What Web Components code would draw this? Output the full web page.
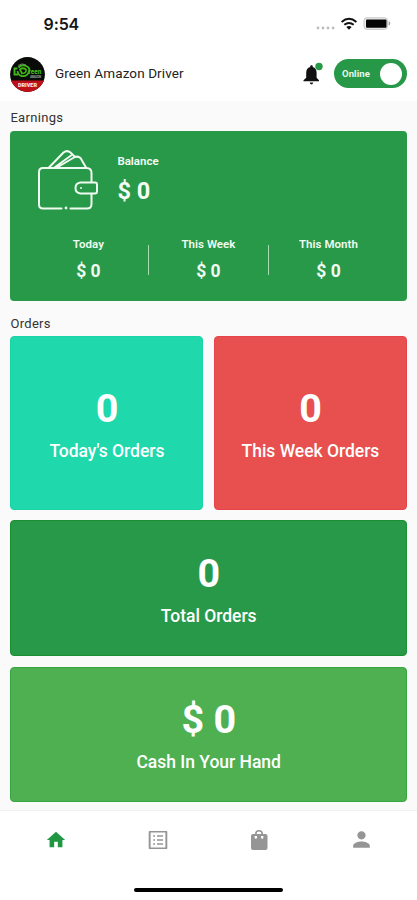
<!DOCTYPE html>
<html lang="en">
<head>
<meta charset="utf-8">
<title>Green Amazon Driver</title>
<style>
html,body{margin:0;height:100%;background:#fff;font-family:Roboto,"Liberation Sans",sans-serif}
</style>
</head>
<body>
<driver-app></driver-app>
<script>
const define=(name,html)=>{
  const t=document.createElement('template');
  t.innerHTML=html;
  customElements.define(name,class extends HTMLElement{
    constructor(){super();this.attachShadow({mode:'open'}).append(t.content.cloneNode(true));}
  });
};

define('status-bar',`
<style>
:host{display:flex;height:48px;box-sizing:border-box;padding:0 26px 0 43.500px;align-items:center;justify-content:space-between}
.time{font:600 16px/20px Inter,sans-serif;color:#161616;letter-spacing:-.1px}
svg{display:block;margin-top:-1px}
</style>
<span class="time">9:54</span>
<svg width="76" height="20" viewBox="0 0 76 20">
<g fill="#bdbdbd"><circle cx="3" cy="14" r="1.400"/><circle cx="8" cy="14" r="1.400"/><circle cx="13" cy="14" r="1.400"/><circle cx="18.100" cy="14" r="1.400"/></g>
<g fill="none" stroke="#111" stroke-width="2"><path d="M26.600 7.900Q34 1.700 41.400 7.900"/><path d="M29.300 10.800Q34 7.100 38.700 10.800"/></g>
<path d="M31.300 12.900Q34 10.900 36.700 12.900L34 15.800Z" fill="#111"/>
<rect x="49" y="3.800" width="23.500" height="11.500" rx="3" fill="#eee" stroke="#c4c4c4"/>
<rect x="51" y="5.500" width="20.500" height="8.300" rx="1" fill="#050505"/>
<path d="M74 7.600q2 1.700 0 3.600Z" fill="#999" stroke="#999" stroke-width=".6"/>
</svg>`);

define('brand-avatar',`
<style>:host{display:block;width:35px;height:35px}svg{display:block}text{font-family:Roboto,sans-serif;font-weight:900}</style>
<svg width="35" height="35" viewBox="0 0 35 35">
<defs><clipPath id="c"><circle cx="17.500" cy="17.500" r="17.400"/></clipPath></defs>
<g clip-path="url(#c)">
<rect width="35" height="35" fill="#080b08"/>
<rect y="23.500" width="35" height="12" fill="#bd1018"/>
<g fill="none" stroke="#3fb518" stroke-width="1.900">
<path d="M8.500 10.500Q12 6.500 17 9.500Q20.500 11.500 18.800 15Q17 20 11.500 19Q8 18 7.500 14"/>
<path d="M7.500 11.500H4.500V17.500H8"/>
<path d="M10 12.500Q13 10 16 12.500Q17 16 12 16.500Z" stroke-width="1.700"/>
</g>
<path d="M8 8.500Q12 5.500 16 8" fill="none" stroke="#899387" stroke-width=".8"/>
<text x="18.500" y="17.300" font-size="7" textLength="13" lengthAdjust="spacingAndGlyphs" fill="#3fb518">reen</text>
<text x="20" y="20.600" font-size="3" textLength="11" fill="#8a938a">AMAZON</text>
<text x="17.500" y="30" font-size="5.200" textLength="19" lengthAdjust="spacingAndGlyphs" text-anchor="middle" fill="#ffe5e5">DRIVER</text>
</g></svg>`);

define('online-switch',`
<style>
:host{display:flex;box-sizing:border-box;width:73px;height:29px;border-radius:15px;background:#279847;align-items:center;justify-content:space-between;padding:0 5px 0 8px;color:#e9f8ec;font-size:9.500px;font-weight:700;margin-top:-2px}
span{letter-spacing:.1px}
i{width:22px;height:22px;border-radius:50%;background:#fff}
</style><span><slot></slot></span><i></i>`);

define('app-header',`
<style>
:host{display:flex;height:53px;box-sizing:border-box;padding:0 10px;align-items:center;background:#fff}
.name{margin:-4px 0 0 10px;font-size:13.500px;line-height:18px;letter-spacing:.1px;color:#222;flex:1}
.bell{display:block;margin:-2px 10px 0 0}
</style>
<brand-avatar></brand-avatar>
<span class="name"><slot></slot></span>
<svg class="bell" width="22" height="24" viewBox="0 0 22 24">
<path d="M9.500 3.200c.8 0 1.300.5 1.300 1.200v.6c2.500.7 3.800 2.900 3.800 5.800v5l2.400 2.500v1H1.500v-1l2.700-2.500v-5C4.200 7.900 5.500 5.700 8.200 5v-.6c0-.7.500-1.200 1.300-1.200Z" fill="#111"/>
<path d="M7.700 20.500h3.600q-.4 2-1.800 2t-1.800-2Z" fill="#222"/>
<circle cx="17" cy="4.500" r="3.700" fill="#289947"/>
</svg>
<online-switch>Online</online-switch>`);

define('section-title',`
<style>:host{display:block;font-size:13px;line-height:18px;height:18px;letter-spacing:.32px;color:#333}</style><slot></slot>`);

define('wallet-icon',`
<style>:host{display:block;width:62px;height:62px}svg{display:block}</style>
<svg width="62" height="62" viewBox="0 0 62 62" fill="none" stroke="#effbf0" stroke-width="2" stroke-linecap="round" stroke-linejoin="round">
<path d="M24.500 59.500H6Q2 59.500 2 55.500V23Q2 19 6 19H49.500Q54.500 19 54.500 24V33M54.500 45V55Q54.500 59.500 50 59.500H33.500"/>
<path d="M12 18.500L26.500 3.500Q30 0.800 33.500 3.500L38 8M20 18.500L37 8.500Q40.500 6.500 43.500 9L49 18.500M17.500 18.500L34 6.500"/>
<path d="M43.500 33.500H58Q60 33.500 60 35.500V42.500Q60 44.500 58 44.500H43.500Q38.500 44 38.500 39Q38.500 34 43.500 33.500Z"/>
<circle cx="44" cy="39" r="1" fill="#effbf0" stroke="none"/><circle cx="29" cy="59" r="1.400" fill="#effbf0" stroke="none"/>
</svg>`);

define('stat-item',`
<style>
:host{display:flex;flex-direction:column;align-items:center;color:#f0fbf1}
.l{font-size:11.500px;font-weight:600;line-height:16px;letter-spacing:.05px}
.v{font-size:17.500px;font-weight:700;line-height:22px;margin-top:8px}
</style><span class="l"><slot name="label"></slot></span><span class="v"><slot></slot></span>`);

define('earnings-card',`
<style>
:host{display:block;box-sizing:border-box;height:169.500px;border-radius:4px;background:#289949;color:#f5fdf5;padding-top:18px}
.top{display:flex;padding-left:27px;height:62px}
.bal{margin-left:18px;display:flex;flex-direction:column;padding-top:4px}
.l{font-size:11.500px;font-weight:600;line-height:16px}
.v{font-size:23.500px;font-weight:700;line-height:28px;margin-top:8px}
.row{display:grid;grid-template-columns:1fr 1px 1fr 1px 1fr;margin:25px 19px 0 18.500px}
.row i{background:#a9dcb0;width:1.500px;height:30px;margin-top:9px}
</style>
<div class="top"><wallet-icon></wallet-icon><div class="bal"><span class="l">Balance</span><span class="v">$ 0</span></div></div>
<div class="row">
<stat-item><span slot="label">Today</span>$ 0</stat-item><i></i>
<stat-item><span slot="label">This Week</span>$ 0</stat-item><i></i>
<stat-item><span slot="label">This Month</span>$ 0</stat-item>
</div>`);

define('metric-card',`
<style>
:host{display:flex;box-sizing:border-box;flex-direction:column;align-items:center;justify-content:center;height:var(--h,135px);background:var(--bg);border:1px solid var(--edge);border-radius:4px;color:#fff}
.v{font-size:39.500px;font-weight:700;line-height:48px;margin-top:2px;letter-spacing:-.2px}
.l{font-size:17.500px;font-weight:500;line-height:24px;margin-top:6px;letter-spacing:-.02px}
</style><span class="v"><slot></slot></span><span class="l"><slot name="label"></slot></span>`);

define('tab-bar',`
<style>
:host{display:block;height:90px;background:#fff;border-top:1px solid #f1f1f1;box-sizing:border-box}
nav{display:grid;grid-template-columns:repeat(4,1fr);padding:0 5px;height:57px;align-items:center;justify-items:center}
svg{display:block;fill:#959595}
.home{fill:#229743}
.bar{width:149px;height:4px;border-radius:2px;background:#000;margin:20px auto 0}
</style>
<nav>
<svg class="home" width="22" height="22" viewBox="0 0 24 24"><path d="M10 20v-6h4v6h5v-8h3L12 3 2 12h3v8z"/></svg>
<svg width="24" height="24" viewBox="0 0 24 24"><path d="M19.400 4.500v15H4.600V4.500h14.800m1-1.600H3.600c-.5 0-.9.400-.9.900v16.400c0 .4.400.9.900.9h16.800c.4 0 .9-.5.900-.9V3.800c0-.5-.5-.9-.9-.9zM11 7.300h6v1.500h-6zm0 4h6v1.500h-6zm0 4h6v1.500h-6zM7.200 7.300h1.800v1.500H7.200zm0 4h1.800v1.500H7.200zm0 4h1.800v1.500H7.200z"/></svg>
<svg width="22" height="24" viewBox="0 0 22 24"><path d="M17.500 6H15a4 4 0 0 0-8 0H5a2 2 0 0 0-2 2v12a2 2 0 0 0 2 2h12.500a2 2 0 0 0 2-2V8a2 2 0 0 0-2-2zM11 3.600A2.400 2.400 0 0 1 13.400 6H8.600A2.400 2.400 0 0 1 11 3.600zM9 9.500a1.200 1.200 0 0 1-2.400 0V8H9zm6.400 0a1.200 1.200 0 0 1-2.400 0V8h2.400z"/></svg>
<svg width="25" height="25" viewBox="0 0 24 24"><path d="M12 12c2.210 0 4-1.790 4-4s-1.790-4-4-4-4 1.790-4 4 1.790 4 4 4zm0 2c-2.670 0-8 1.340-8 4v2h16v-2c0-2.660-5.330-4-8-4z"/></svg>
</nav><div class="bar"></div>`);

define('driver-app',`
<style>
:host{display:flex;flex-direction:column;height:900px;width:417px;overflow:hidden;background:#fff}
main{background:#fafafa;height:709px;box-sizing:border-box;padding:8px 10px 0 10.400px}
.orders{margin-top:14.500px}
.pair{display:grid;grid-template-columns:1fr 1fr;gap:10.500px;margin:3px 0 10px}
earnings-card{margin-top:4px}
.cash{margin-top:10.500px}
</style>
<status-bar></status-bar>
<app-header>Green Amazon Driver</app-header>
<main>
<section-title>Earnings</section-title>
<earnings-card></earnings-card>
<section-title class="orders">Orders</section-title>
<div class="pair">
<metric-card style="--h:174.400px;--bg:#1fd8ac;--edge:#1bd4a6"><span slot="label">Today's Orders</span>0</metric-card>
<metric-card style="--h:174.400px;--bg:#e85050;--edge:#e4444a"><span slot="label">This Week Orders</span>0</metric-card>
</div>
<metric-card style="--h:136px;--bg:#289949;--edge:#188f30"><span slot="label">Total Orders</span>0</metric-card>
<metric-card class="cash" style="--h:135px;--bg:#4eb051;--edge:#36a740"><span slot="label">Cash In Your Hand</span>$ 0</metric-card>
</main>
<tab-bar></tab-bar>`);
</script>
</body>
</html>
